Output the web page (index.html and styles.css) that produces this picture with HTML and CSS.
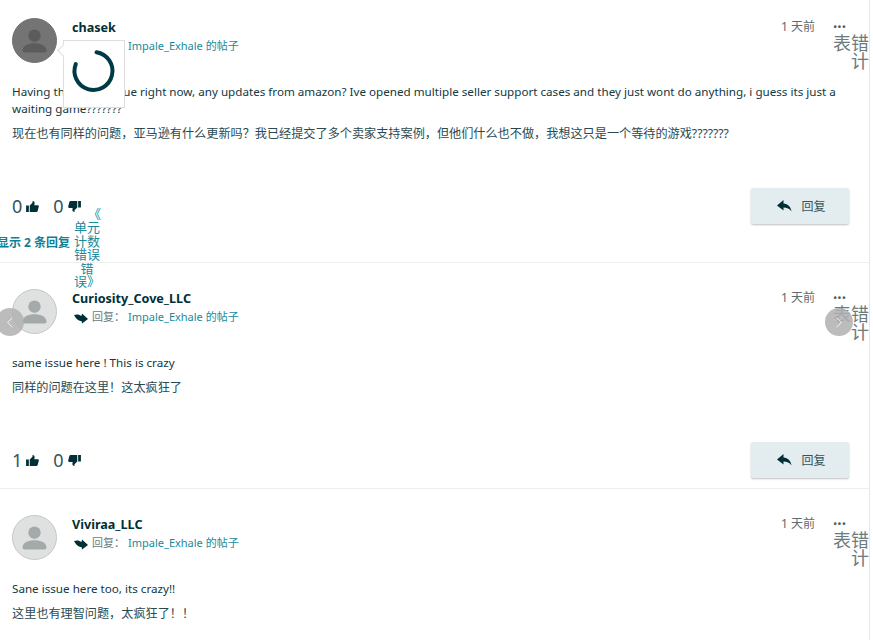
FILE: index.html
```html
<!DOCTYPE html>
<html>
<head>
  <meta charset="UTF-8">
  <title>帖子回复</title>
  <link rel="stylesheet" href="styles.css">
</head>
<body>
  <svg class="defs">
    <defs>
      <symbol id="person" viewBox="0 0 45 45">
        <circle cx="22.5" cy="17.5" r="6.5"/>
        <path d="M10 33c0-5 6-7.500 12.500-7.500S35 28 35 33c0 1.500-1 2-2.500 2h-20C11 35 10 34.500 10 33z"/>
      </symbol>
      <symbol id="thumb" viewBox="0 0 14 12">
        <path d="M0 5h3v7H0zM4 5l3-3V0c1.500 0 2.500 1 2.300 2.500L9 4.500h3.700c.9 0 1.400.8 1.200 1.600l-1.300 4.800c-.2.700-.7 1.100-1.400 1.100H4z"/>
      </symbol>
      <symbol id="side-arrow" viewBox="0 0 14 11">
        <path d="M0 2C3 1 5.500 1.500 7.500 3L8 .5 14 6l-6 4.500-.5-2.500C4 8 2 5.500 0 2z"/>
      </symbol>
      <symbol id="reply-arrow" viewBox="0 0 15 13">
        <path d="M6.500 0L0 5.500l6.500 5V7.500c3.500 0 6 1 8 4C14 7 11 3.800 6.500 3.500z"/>
      </symbol>
    </defs>
  </svg>

  <div class="feed">
    <div class="post post-first">
      <div class="post-head">
        <div class="avatar avatar-dark"><svg><use href="#person"/></svg></div>
        <div class="who">
          <div class="name">chasek</div>
          <div class="reply-to">
            <svg class="to-arrow"><use href="#side-arrow"/></svg>
            <span class="muted">回复：</span>
            <a class="link">Impale_Exhale 的帖子</a>
          </div>
        </div>
        <div class="when">1 天前</div>
        <div class="more">
          <div class="dots">•••</div>
          <div class="report">表错计</div>
        </div>
      </div>
      <div class="post-body">
        <p class="line">Having this same issue right now, any updates from amazon? Ive opened multiple seller support cases and they just wont do anything, i guess its just a waiting game???????</p>
        <p class="line zh">现在也有同样的问题，亚马逊有什么更新吗？我已经提交了多个卖家支持案例，但他们什么也不做，我想这只是一个等待的游戏???????</p>
      </div>
      <div class="post-foot">
        <div class="votes">
          <span class="count">0</span><svg class="thumb"><use href="#thumb"/></svg>
          <span class="count count-down">0</span><svg class="thumb thumb-down"><use href="#thumb"/></svg>
        </div>
        <button class="reply-btn"><svg><use href="#reply-arrow"/></svg>回复</button>
      </div>
      <div class="show-replies">
        <a class="show-link">显示 2 条回复</a>
        <a class="unit-note"><span class="note-open">《</span><br>单元<br>计数<br>错误<br>错<br>误》</a>
      </div>
      <div class="popover">
        <svg viewBox="0 0 60 64" class="spinner">
          <path d="M32.500 11.200A19 19 0 1 1 11.800 23"/>
        </svg>
      </div>
    </div>

    <div class="post">
      <div class="post-head">
        <div class="avatar"><svg><use href="#person"/></svg></div>
        <div class="who">
          <div class="name">Curiosity_Cove_LLC</div>
          <div class="reply-to">
            <svg class="to-arrow"><use href="#side-arrow"/></svg>
            <span class="muted">回复：</span>
            <a class="link">Impale_Exhale 的帖子</a>
          </div>
        </div>
        <div class="when">1 天前</div>
        <div class="more">
          <div class="dots">•••</div>
          <div class="report">表错计</div>
        </div>
      </div>
      <div class="post-body">
        <p class="line">same issue here ! This is crazy</p>
        <p class="line zh">同样的问题在这里！这太疯狂了</p>
      </div>
      <div class="post-foot">
        <div class="votes">
          <span class="count">1</span><svg class="thumb"><use href="#thumb"/></svg>
          <span class="count count-down">0</span><svg class="thumb thumb-down"><use href="#thumb"/></svg>
        </div>
        <button class="reply-btn"><svg><use href="#reply-arrow"/></svg>回复</button>
      </div>
    </div>

    <div class="post">
      <div class="post-head">
        <div class="avatar"><svg><use href="#person"/></svg></div>
        <div class="who">
          <div class="name">Viviraa_LLC</div>
          <div class="reply-to">
            <svg class="to-arrow"><use href="#side-arrow"/></svg>
            <span class="muted">回复：</span>
            <a class="link">Impale_Exhale 的帖子</a>
          </div>
        </div>
        <div class="when">1 天前</div>
        <div class="more">
          <div class="dots">•••</div>
          <div class="report">表错计</div>
        </div>
      </div>
      <div class="post-body">
        <p class="line">Sane issue here too, its crazy!!</p>
        <p class="line zh">这里也有理智问题，太疯狂了！！</p>
      </div>
    </div>

    <div class="nav-btn nav-prev"><svg viewBox="0 0 10 16"><path d="M8 2L2 8l6 6"/></svg></div>
    <div class="nav-btn nav-next"><svg viewBox="0 0 10 16"><path d="M2 2l6 6-6 6"/></svg></div>
  </div>
</body>
</html>
```

FILE: styles.css
```css
html, body {
  margin: 0;
  height: 640px;
  overflow: hidden;
  background: #fff;
}
body {
  font-family: "Noto Sans", "Noto Sans CJK SC", sans-serif;
  font-size: 12px;
  color: #002f36;
}
.defs {
  display: none;
}
.feed {
  position: relative;
  width: 869px;
  height: 640px;
  overflow: hidden;
  border-right: 1px solid #e7e7e7;
}
.post {
  position: relative;
  padding: 26px 20px 10px 12px;
  border-top: 1px solid #eeeeee;
}
.post-first {
  padding-top: 18px;
  padding-bottom: 0;
  border-top: none;
}
.post-head {
  display: flex;
  height: 45px;
}
.avatar {
  width: 45px;
  height: 45px;
  flex: none;
  box-sizing: border-box;
  border: 1px solid #c4c8c8;
  border-radius: 50%;
  background: #dfe1e1;
  color: #a4a9a9;
}
.avatar svg {
  display: block;
  width: 100%;
  height: 100%;
  fill: currentColor;
}
.avatar-dark {
  border-color: #707070;
  background: #747474;
  color: #5c5c5c;
}
.who {
  flex: 1;
  margin-left: 15px;
}
.name {
  font-size: 12.600px;
  font-weight: 700;
  line-height: 19px;
}
.reply-to {
  display: flex;
  align-items: center;
  height: 16px;
  margin-top: 1px;
  line-height: 16px;
  font-size: 11px;
}
.to-arrow {
  width: 14px;
  height: 11px;
  margin: 2px 4px 0 2px;
  fill: #002f36;
}
.muted {
  color: #6a7a7d;
}
.link {
  margin-left: 3px;
  color: #1a8a9b;
}
.when {
  margin-top: 1px;
  font-size: 12px;
  line-height: 16px;
  color: #5f6b6d;
}
.more {
  width: 36px;
  margin-left: 18px;
  margin-right: -20px;
}
.dots {
  height: 16px;
  font-size: 11.500px;
  line-height: 18px;
  color: #4c5a5c;
}
.report {
  font-size: 18px;
  line-height: 18px;
  text-align: right;
  color: #6e7b7d;
}
.post-body {
  margin-top: 20px;
  color: #12393f;
}
.line {
  margin: 0 0 8px;
  font-size: 11.650px;
  line-height: 17px;
}
.post-body .zh {
  margin-bottom: 0;
  font-size: 12.150px;
  color: #2a4a50;
}
.post-foot {
  display: flex;
  align-items: center;
  justify-content: space-between;
  height: 36px;
  margin-top: 46px;
}
.votes {
  display: flex;
  align-items: center;
  height: 36px;
}
.count {
  font-size: 18px;
  color: #33555b;
}
.count-down {
  margin-left: 14px;
}
.thumb {
  width: 13px;
  height: 11px;
  margin-left: 4px;
  fill: #002f36;
}
.thumb-down {
  transform: rotate(180deg);
}
.reply-btn {
  display: flex;
  align-items: center;
  justify-content: center;
  width: 98px;
  height: 36px;
  padding: 0 0 0 3px;
  border: none;
  border-radius: 2px;
  background: #e3ecee;
  box-shadow: 0 1px 2px rgba(0, 0, 0, 0.25);
  font: inherit;
  font-size: 12px;
  color: #33555b;
}
.reply-btn svg {
  width: 15px;
  height: 13px;
  margin-right: 9px;
  fill: #002f36;
}
.show-replies {
  position: relative;
  height: 38px;
  margin-left: -15px;
  line-height: 38px;
}
.show-link {
  font-weight: 700;
  color: #0f7f91;
}
.unit-note {
  position: absolute;
  top: -16px;
  left: 77px;
  width: 26px;
  font-size: 13px;
  line-height: 13.400px;
  text-align: center;
  color: #1a8a9b;
}
.note-open {
  margin-left: 14px;
}
.popover {
  position: absolute;
  top: 40px;
  left: 63px;
  width: 60px;
  height: 66px;
  border: 1px solid #dedede;
  background: #fff;
}
.popover::before {
  content: "";
  position: absolute;
  top: 5px;
  left: -5px;
  width: 8px;
  height: 8px;
  border-left: 1px solid #dedede;
  border-bottom: 1px solid #dedede;
  background: #fff;
  transform: rotate(45deg);
}
.spinner {
  display: block;
  width: 60px;
  height: 64px;
  fill: none;
  stroke: #003b45;
  stroke-width: 4;
  stroke-linecap: round;
}
.nav-btn {
  position: absolute;
  top: 308px;
  display: flex;
  align-items: center;
  justify-content: center;
  width: 28px;
  height: 28px;
  border-radius: 50%;
  background: rgba(176, 176, 176, 0.85);
}
.nav-btn svg {
  width: 8px;
  height: 13px;
  fill: none;
  stroke: #fff;
  stroke-width: 1;
}
.nav-prev {
  left: -4px;
}
.nav-next {
  left: 825px;
}
```
